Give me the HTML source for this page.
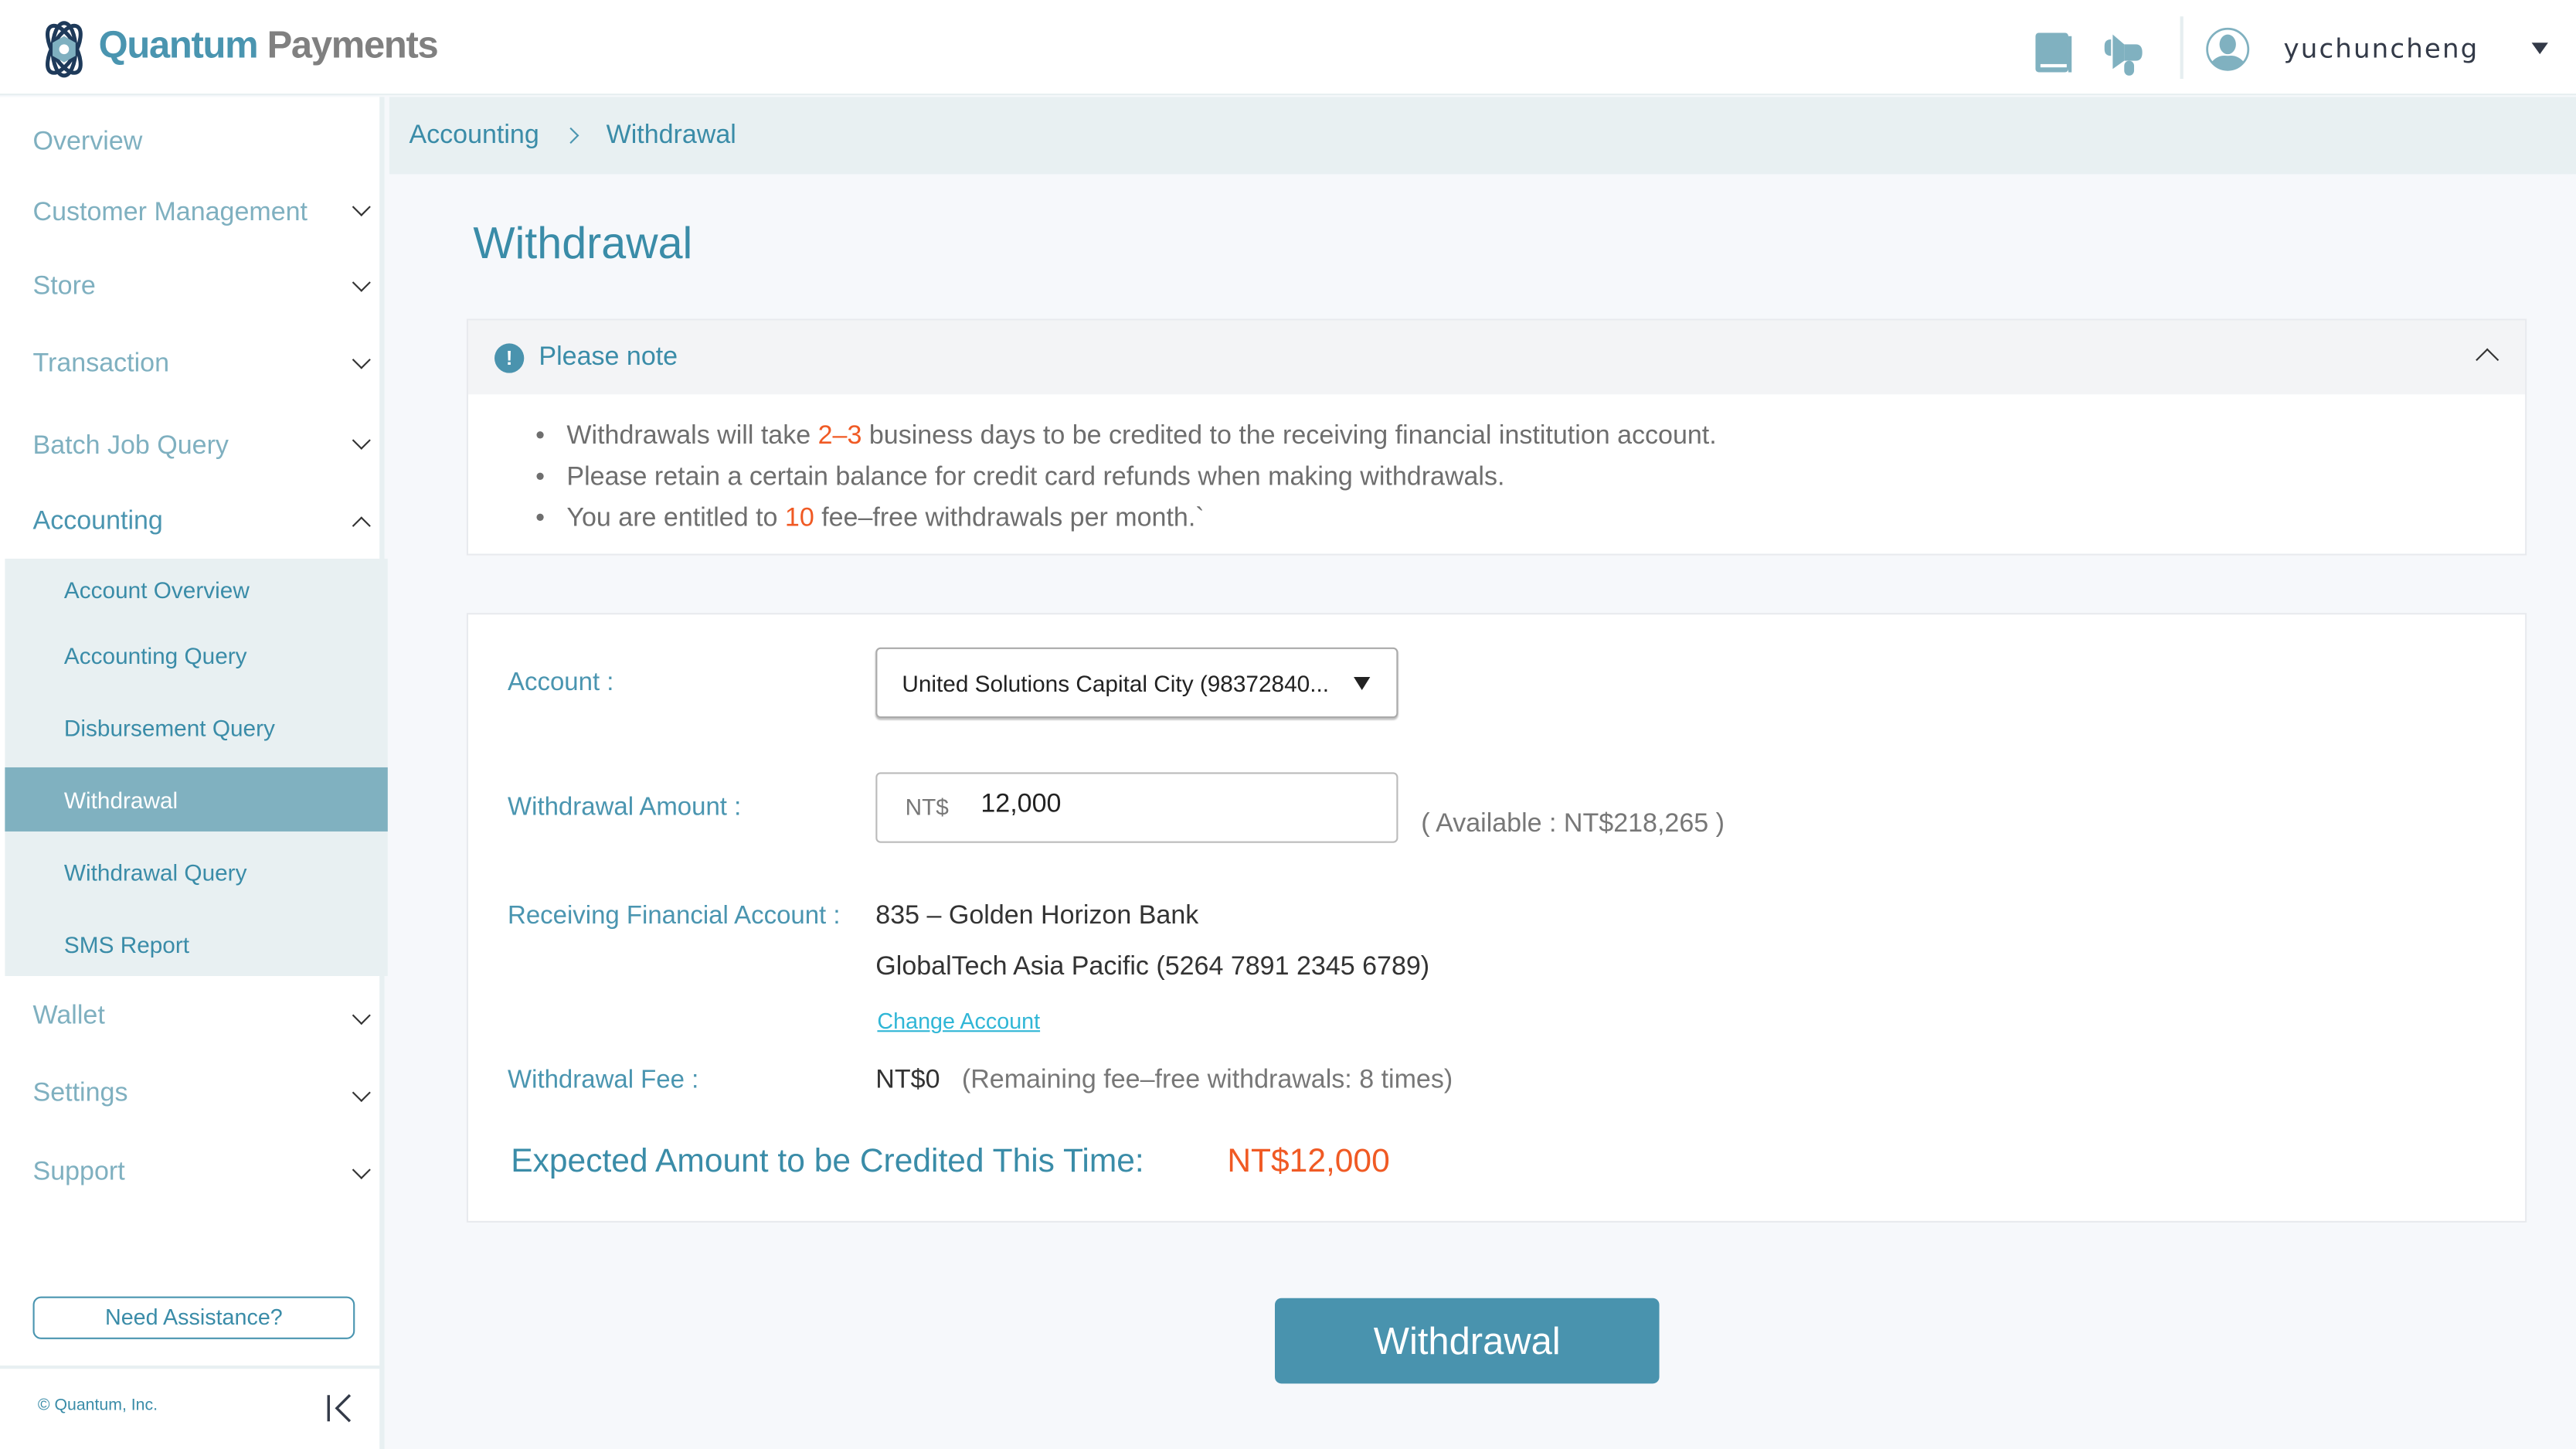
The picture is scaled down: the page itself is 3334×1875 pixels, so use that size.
<!DOCTYPE html>
<html><head><meta charset="utf-8"><style>
*{box-sizing:border-box;margin:0;padding:0}
html,body{width:3334px;height:1875px;overflow:hidden;background:#f6f8fb}
#w{position:absolute;left:0;top:0;width:1568px;height:882px;transform:scale(2.12628);transform-origin:0 0;font-family:"Liberation Sans",sans-serif;background:#f6f8fb}
.a{position:absolute}
.top{left:0;top:0;width:1568px;height:58px;background:#fff;border-bottom:1px solid #e6eef0}
.side{left:0;top:59px;width:234px;height:823px;background:#fff;border-right:3px solid #e8f0f2}
.mi{position:absolute;left:20px;font-size:16px;color:#7fb0c0}
.mi.t{color:#4a95b0}
.chev{position:absolute;left:216px;width:8px;height:8px;border-right:1.3px solid #333;border-bottom:1.3px solid #333;transform:rotate(45deg)}
.sub{position:absolute;left:39px;font-size:14px;color:#3a8ca8}
.lbl{position:absolute;left:309px;font-size:15.5px;color:#4a95b0}
.txt{position:absolute;font-size:16px;color:#333}
</style></head><body><div id="w">
<div class="a top"></div>
<svg class="a" style="left:21px;top:11px" width="36" height="38" viewBox="0 0 36 38">
<g fill="none" stroke="#1e3a5a" stroke-width="2.4"><ellipse cx="18" cy="19" rx="16" ry="7" transform="rotate(60 18 19)"/><ellipse cx="18" cy="19" rx="16" ry="7" transform="rotate(-60 18 19)"/><ellipse cx="18" cy="19" rx="7" ry="16"/></g>
<polygon points="18,11 25,15 25,23 18,27 11,23 11,15" fill="#7fb0c0"/><circle cx="18" cy="19" r="3" fill="#fff"/></svg>
<div class="a" style="left:60px;top:14px;font-size:23px;font-weight:bold;letter-spacing:-0.6px;color:#4a95b0">Quantum <span style="color:#808080">Payments</span></div>
<svg class="a" style="left:1237px;top:18px" width="26" height="28" viewBox="0 0 26 28"><rect x="2" y="2" width="20" height="24" rx="2" fill="#80b1c0"/><rect x="22" y="4" width="2" height="22" fill="#80b1c0"/><rect x="5" y="21" width="16" height="2" fill="#fff"/></svg>
<svg class="a" style="left:1278px;top:18px" width="30" height="30" viewBox="0 0 30 30"><path d="M3 10 Q3 6 7 6 L7 16 Q3 16 3 12Z" fill="#80b1c0"/><path d="M8 3 L15 9 L15 19 L8 24Z" fill="#80b1c0"/><path d="M15 9 L22 9 Q26 9 26 14 Q26 19 22 19 L15 19Z" fill="#80b1c0"/><rect x="15" y="19" width="6" height="9" rx="3" fill="#80b1c0"/></svg>
<div class="a" style="left:1327px;top:10px;width:2px;height:38px;background:#e6eef0"></div>
<svg class="a" style="left:1342px;top:16px" width="28" height="28" viewBox="0 0 28 28"><circle cx="14" cy="14" r="12.5" fill="#fff" stroke="#80b1c0" stroke-width="1.3"/><ellipse cx="14" cy="11" rx="5" ry="6" fill="#80b1c0"/><path d="M4 22 Q8 17 14 18 Q20 17 24 22 Q20 27 14 27 Q8 27 4 22Z" fill="#80b1c0"/></svg>
<div class="a" style="left:1390px;top:20px;font-size:16px;letter-spacing:1px;color:#333a48;font-family:'DejaVu Sans',sans-serif">yuchuncheng</div>
<div class="a" style="left:1541px;top:26px;width:0;height:0;border-left:5.5px solid transparent;border-right:5.5px solid transparent;border-top:7px solid #333a48"></div>

<div class="a side"></div>
<div class="mi" style="top:78px">Overview</div>
<div class="mi" style="top:121px">Customer Management</div><div class="chev" style="top:122px"></div>
<div class="mi" style="top:166px">Store</div><div class="chev" style="top:168px"></div>
<div class="mi" style="top:213px">Transaction</div><div class="chev" style="top:215px"></div>
<div class="mi" style="top:263px">Batch Job Query</div><div class="chev" style="top:264px"></div>
<div class="mi t" style="top:309px">Accounting</div><div class="chev" style="top:316px;transform:rotate(-135deg)"></div>
<div class="a" style="left:3px;top:340px;width:233px;height:254px;background:#e8f0f2"></div>
<div class="a" style="left:3px;top:467px;width:233px;height:39px;background:#80b1c0"></div>
<div class="sub" style="top:351px">Account Overview</div>
<div class="sub" style="top:391px">Accounting Query</div>
<div class="sub" style="top:435px">Disbursement Query</div>
<div class="sub" style="top:479px;color:#fff">Withdrawal</div>
<div class="sub" style="top:523px">Withdrawal Query</div>
<div class="sub" style="top:567px">SMS Report</div>
<div class="mi" style="top:610px">Wallet</div><div class="chev" style="top:614px"></div>
<div class="mi" style="top:657px">Settings</div><div class="chev" style="top:661px"></div>
<div class="mi" style="top:705px">Support</div><div class="chev" style="top:708px"></div>
<div class="a" style="left:20px;top:789px;width:196px;height:26px;border:1px solid #4a95b0;border-radius:5px;text-align:center;font-size:13.5px;line-height:24px;color:#3a8ca8">Need Assistance?</div>
<div class="a" style="left:0;top:831px;width:234px;height:2px;background:#e8f0f2"></div>
<div class="a" style="left:23px;top:850px;font-size:10px;color:#3a8ca8">© Quantum, Inc.</div>
<svg class="a" style="left:198px;top:847px" width="18" height="20" viewBox="0 0 18 20"><path d="M2 2 V18 M15 2 L7 10 L15 18" stroke="#333a48" stroke-width="1.6" fill="none"/></svg>

<div class="a" style="left:237px;top:59px;width:1331px;height:47px;background:#e8f0f2"></div>
<div class="a" style="left:249px;top:74px;font-size:16px;color:#3a8ca8">Accounting</div>
<div class="a" style="left:344px;top:79px;width:7px;height:7px;border-right:1.3px solid #4a95b0;border-top:1.3px solid #4a95b0;transform:rotate(45deg)"></div>
<div class="a" style="left:369px;top:74px;font-size:16px;color:#3a8ca8">Withdrawal</div>
<div class="a" style="left:288px;top:133px;font-size:27px;color:#3a8ca8">Withdrawal</div>

<div class="a" style="left:284px;top:194px;width:1254px;height:144px;background:#fff;border:1px solid #e8eaee"></div>
<div class="a" style="left:285px;top:195px;width:1252px;height:45px;background:#f3f4f6"></div>
<div class="a" style="left:301px;top:209px;width:18px;height:18px;border-radius:50%;background:#4a93ae;color:#fff;font-size:12px;font-weight:bold;text-align:center;line-height:18px">!</div>
<div class="a" style="left:328px;top:209px;font-size:16px;color:#3a8ca8">Please note</div>
<div class="a" style="left:1509px;top:214px;width:10px;height:10px;border-left:1.5px solid #333;border-top:1.5px solid #333;transform:rotate(45deg)"></div>
<div class="a" style="left:326px;top:253px;font-size:16px;color:#6e6e6e;line-height:25px">
<div>•&nbsp;&nbsp;&nbsp;Withdrawals will take <span style="color:#f05a24">2–3</span> business days to be credited to the receiving financial institution account.</div>
<div>•&nbsp;&nbsp;&nbsp;Please retain a certain balance for credit card refunds when making withdrawals.</div>
<div>•&nbsp;&nbsp;&nbsp;You are entitled to <span style="color:#f05a24">10</span> fee–free withdrawals per month.`</div></div>

<div class="a" style="left:284px;top:373px;width:1254px;height:371px;background:#fff;border:1px solid #e8eaee"></div>
<div class="lbl" style="top:407px">Account :</div>
<div class="a" style="left:533px;top:394px;width:318px;height:43px;border:1px solid #aaa;border-radius:3px;box-shadow:0 1px 1px #bbb"></div>
<div class="a" style="left:549px;top:408px;font-size:14px;color:#222">United Solutions Capital City (98372840...</div>
<div class="a" style="left:824px;top:412px;width:0;height:0;border-left:5px solid transparent;border-right:5px solid transparent;border-top:8px solid #222"></div>
<div class="lbl" style="top:483px">Withdrawal Amount :</div>
<div class="a" style="left:533px;top:470px;width:318px;height:43px;border:1px solid #bbb;border-radius:3px"></div>
<div class="a" style="left:551px;top:483px;font-size:14px;color:#777">NT$</div>
<div class="a" style="left:597px;top:481px;font-size:16px;color:#222">12,000</div>
<div class="a" style="left:865px;top:493px;font-size:16px;color:#777">( Available : NT$218,265 )</div>
<div class="lbl" style="top:549px">Receiving Financial Account :</div>
<div class="txt" style="left:533px;top:549px">835 – Golden Horizon Bank</div>
<div class="txt" style="left:533px;top:580px">GlobalTech Asia Pacific (5264 7891 2345 6789)</div>
<div class="a" style="left:534px;top:614px;font-size:13.5px;color:#2fb6d6;text-decoration:underline">Change Account</div>
<div class="lbl" style="top:649px">Withdrawal Fee :</div>
<div class="txt" style="left:533px;top:649px">NT$0 &nbsp;&nbsp;<span style="color:#777">(Remaining fee–free withdrawals: 8 times)</span></div>
<div class="a" style="left:311px;top:696px;font-size:20px;color:#3a8ca8">Expected Amount to be Credited This Time:</div>
<div class="a" style="left:747px;top:696px;font-size:20px;color:#f05a24">NT$12,000</div>
<div class="a" style="left:776px;top:790px;width:234px;height:52px;background:#4993ae;border-radius:4px;color:#fff;font-size:23px;text-align:center;line-height:52px">Withdrawal</div>
</div></body></html>
